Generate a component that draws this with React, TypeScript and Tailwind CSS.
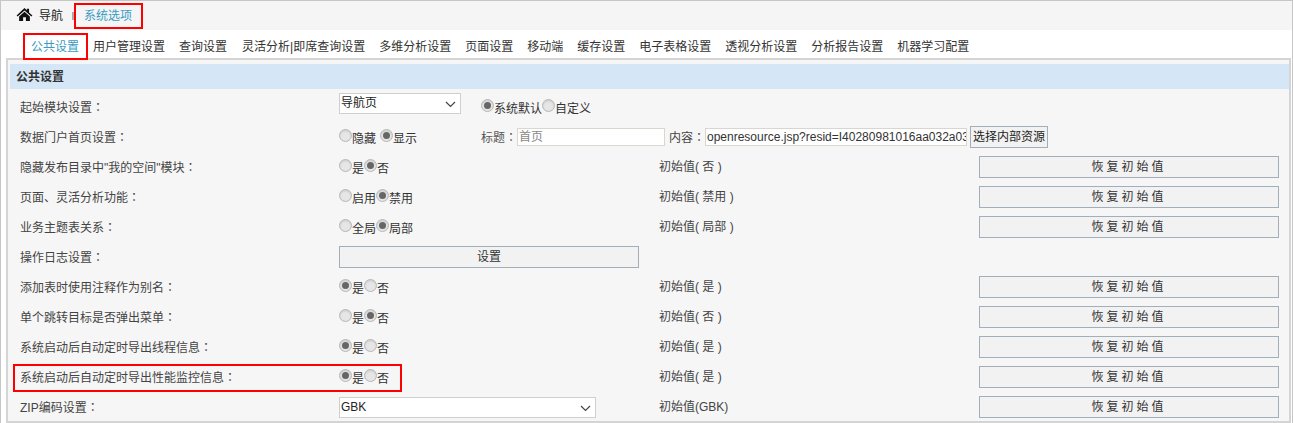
import React from "react";

function Radio({ on }: { on?: boolean }) {
  return (
    <span className="inline-flex h-[13px] w-[13px] shrink-0 items-center justify-center rounded-full border border-[#b8b8b8] bg-[#e6e6e6] shadow-[inset_0_1px_2px_#c8c8c8]">
      {on ? <span className="h-[7px] w-[7px] rounded-full bg-[#666]" /> : null}
    </span>
  );
}

function Radios({ items, on, gap }: { items: string[]; on: number; gap?: boolean }) {
  return (
    <div className={`flex items-start ${gap ? "gap-x-[4px]" : ""}`}>
      {items.map((t, i) => (
        <div key={t} className="flex items-start">
          <Radio on={i === on} />
          <span className="mt-[3px] text-[#333]">{t}</span>
        </div>
      ))}
    </div>
  );
}

function Colon() {
  return <span className="font-['Noto_Sans_CJK_TC']">：</span>;
}

function Reset() {
  return (
    <button className="block h-[22px] w-[300px] border border-[#a3aebb] bg-[#f2f2f2] text-[12px] tracking-[3px] text-[#333]">
      恢复初始值
    </button>
  );
}

function Row({ label, children, init, reset = true }: { label: string; children: React.ReactNode; init?: string; reset?: boolean }) {
  return (
    <div className="grid h-[30px] grid-cols-[319px_320px_320px_300px] items-center pl-[10px]">
      <div className="text-[#444]">
        {label}
        <Colon />
      </div>
      <div>{children}</div>
      <div className="text-[#444]">{init}</div>
      <div>{reset ? <Reset /> : null}</div>
    </div>
  );
}

const tabs = ["公共设置", "用户管理设置", "查询设置", "灵活分析|即席查询设置", "多维分析设置", "页面设置", "移动端", "缓存设置", "电子表格设置", "透视分析设置", "分析报告设置", "机器学习配置"];

function Chevron() {
  return (
    <svg width="11" height="7" viewBox="0 0 11 7" className="absolute top-[7px] right-[4px]" fill="none" stroke="#444" strokeWidth="1.2">
      <path d="M1 1l4.5 4.5L10 1" />
    </svg>
  );
}

function Select({ w, text }: { w: string; text: string }) {
  return (
    <div className={`relative flex h-[21px] items-center border border-[#cfcfcf] bg-white pl-[1px] text-[#222] ${w}`}>
      {text}
      <Chevron />
    </div>
  );
}

export default function App() {
  return (
    <div
      className="relative h-[423px] w-[1293px] overflow-hidden border-x border-t border-[#c6c6c6] bg-white text-[12px] leading-[14px]"
      style={{ fontFamily: '"Liberation Sans", "Noto Sans CJK SC", sans-serif' }}
    >
      <div className="flex h-[29px] items-center bg-[#f5f5f5] pl-[15px]">
        <svg width="17" height="13" viewBox="0 0 17 14" fill="#111" className="mb-[3px]">
          <path d="M8.5 0 L11 2.3V0.8h2.4v4.1L17 8l-1.1 1.2L8.5 2.7 1.1 9.2 0 8z" />
          <path d="M8.5 4 L14.3 9.1V14H10V10H7V14H2.7V9.1z" />
        </svg>
        <span className="ml-[6px] text-[#222]">导航</span>
        <span className="ml-[9px] h-[8px] w-[2px] bg-[#aaa]" />
        <span className="ml-[10px] text-[#3a9bc4]">系统选项</span>
      </div>
      <div className="flex h-[28px] items-center gap-[14px] pt-[6px] pl-[30px] text-[#333]">
        {tabs.map((t, i) => (
          <span key={t} className={i === 0 ? "text-[#3a9bc4]" : i === 3 ? "ml-px" : ""}>{t}</span>
        ))}
      </div>
      <div className="ml-[5px] h-[365px] w-[1285px] border-x-2 border-y-2 border-[#d4d4d4] bg-[#f6f6f6] pt-[4px] pl-[2px]">
        <div className="flex h-[25px] w-[1279px] items-center bg-[#d5e6f6] pl-[6px] font-bold text-[#333]">公共设置</div>
        <div className="w-[1279px] pt-[3px]">
          <Row label="起始模块设置" reset={false}>
            <div className="flex items-start">
              <div className="-mt-[6px]"><Select w="w-[122px]" text="导航页" /></div>
              <div className="ml-[20px]"><Radios items={["系统默认", "自定义"]} on={0} /></div>
            </div>
          </Row>
          <div className="flex h-[30px] items-center pl-[10px]">
            <div className="w-[319px] text-[#444]">数据门户首页设置<Colon /></div>
            <div className="w-[142px]"><Radios items={["隐藏", "显示"]} on={1} gap /></div>
            <span className="w-[36px] whitespace-nowrap text-[#555]">标题<Colon /></span>
            <div className="flex h-[18px] w-[148px] items-center border border-[#d9d6d0] bg-white pl-[1px] text-[#888]">首页</div>
            <span className="ml-[4px] w-[36px] whitespace-nowrap text-[#444]">内容<Colon /></span>
            <div className="flex h-[18px] w-[262px] items-center overflow-hidden border border-[#d9d6d0] bg-white pl-[1px] whitespace-nowrap text-[#333]">openresource.jsp?resid=I40280981016aa032a03</div>
            <button className="ml-[3px] h-[22px] w-[78px] border border-[#a3aebb] bg-[#f2f2f2] whitespace-nowrap text-[#222]">选择内部资源</button>
          </div>
          <Row label={'隐藏发布目录中"我的空间"模块'} init="初始值( 否 )"><Radios items={["是", "否"]} on={1} /></Row>
          <Row label="页面、灵活分析功能" init="初始值( 禁用 )"><Radios items={["启用", "禁用"]} on={1} /></Row>
          <Row label="业务主题表关系" init="初始值( 局部 )"><Radios items={["全局", "局部"]} on={1} /></Row>
          <Row label="操作日志设置" reset={false}>
            <button className="block h-[22px] w-[300px] border border-[#a3aebb] bg-[#f2f2f2] text-[#333]">设置</button>
          </Row>
          <Row label="添加表时使用注释作为别名" init="初始值( 是 )"><Radios items={["是", "否"]} on={0} /></Row>
          <Row label="单个跳转目标是否弹出菜单" init="初始值( 否 )"><Radios items={["是", "否"]} on={1} /></Row>
          <Row label="系统启动后自动定时导出线程信息" init="初始值( 是 )"><Radios items={["是", "否"]} on={0} /></Row>
          <Row label="系统启动后自动定时导出性能监控信息" init="初始值( 是 )"><Radios items={["是", "否"]} on={0} /></Row>
          <Row label="ZIP编码设置" init="初始值(GBK)"><Select w="w-[257px]" text="GBK" /></Row>
        </div>
      </div>
      <div className="absolute top-[2px] left-[73px] h-[26px] w-[69px] border-2 border-[#f00]" />
      <div className="absolute top-[32px] left-[22px] h-[27px] w-[65px] border-2 border-[#f00]" />
      <div className="absolute top-[363px] left-[12px] h-[28px] w-[389px] border-2 border-[#f00]" />
    </div>
  );
}
